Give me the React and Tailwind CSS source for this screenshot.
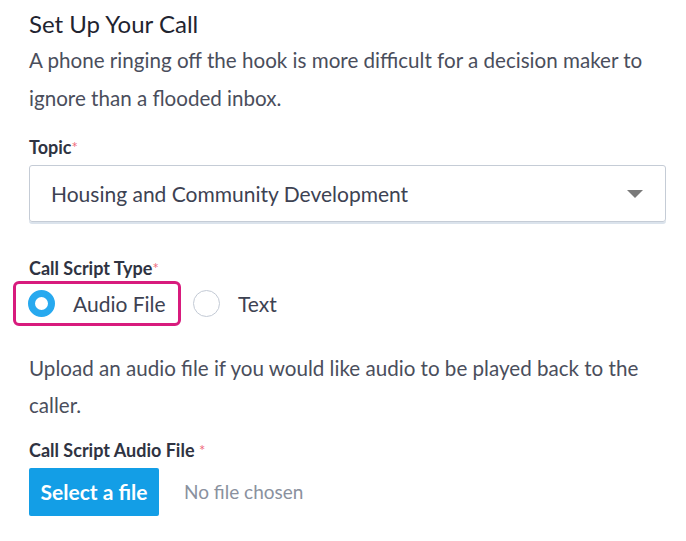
export default function App() {
  return (
    <div className="w-[686px] h-[541px] bg-white pl-[29px] pr-[20px] pt-[9px] text-[#3d4252]" style={{ fontFamily: 'Lato, "Noto Sans", sans-serif' }}>
      <h2 className="text-[24px] leading-[30px] text-[#1f2430]">Set Up Your Call</h2>
      <p className="mt-[2px] pr-[9px] text-[20.6px] leading-[38px] text-[#4a4e5c]">
        A phone ringing off the hook is more difficult for a decision maker to ignore than a flooded inbox.
      </p>

      <label className="mt-[18px] block text-[18px] leading-[24px] font-bold text-[#2f3342]">
        Topic<span className="text-[#ef6b7a] font-normal align-top text-[15px]">*</span>
      </label>
      <div className="mt-[6px] relative h-[57px] rounded-[3px] border border-[#c5ccd6] shadow-[0_2px_0_#dbe3ec] flex items-center pl-[21px] pr-[22px]">
        <span className="flex-1 text-[21px] text-[#3d4252]">Housing and Community Development</span>
        <span className="w-0 h-0 border-l-[8px] border-r-[8px] border-t-[8px] border-l-transparent border-r-transparent border-t-[#7a7a7a]" />
      </div>

      <label className="mt-[34px] block text-[18px] leading-[24px] font-bold text-[#2f3342]">
        Call Script Type<span className="text-[#ef6b7a] font-normal align-top text-[15px]">*</span>
      </label>
      <div className="mt-[1px] -ml-[16px] flex items-center">
        <div className="h-[45px] w-[168px] rounded-[6px] border-[3px] border-[#d81b7d] flex items-center pl-[12px]">
          <span className="w-[27px] h-[27px] rounded-full border-[7px] border-[#27a9ef] bg-white" />
          <span className="ml-[18px] text-[21px] text-[#3d4252]">Audio File</span>
        </div>
        <div className="ml-[12px] flex items-center">
          <span className="w-[27px] h-[27px] rounded-full border border-[#c3cad5] bg-white" />
          <span className="ml-[18px] text-[21px] text-[#3d4252]">Text</span>
        </div>
      </div>

      <p className="mt-[24px] pr-[9px] text-[20.6px] leading-[37px] text-[#4a4e5c]">
        Upload an audio file if you would like audio to be played back to the caller.
      </p>

      <label className="mt-[14px] block text-[18px] leading-[24px] font-bold text-[#2f3342]">
        Call Script Audio File <span className="text-[#ef6b7a] font-normal align-top text-[15px]">*</span>
      </label>
      <div className="mt-[6px] flex items-center">
        <button className="h-[48px] w-[130px] rounded-[2px] bg-[#139ee6] text-white text-[21px] font-bold">Select a file</button>
        <span className="ml-[25px] text-[19px] text-[#8a919e]">No file chosen</span>
      </div>
    </div>
  );
}
